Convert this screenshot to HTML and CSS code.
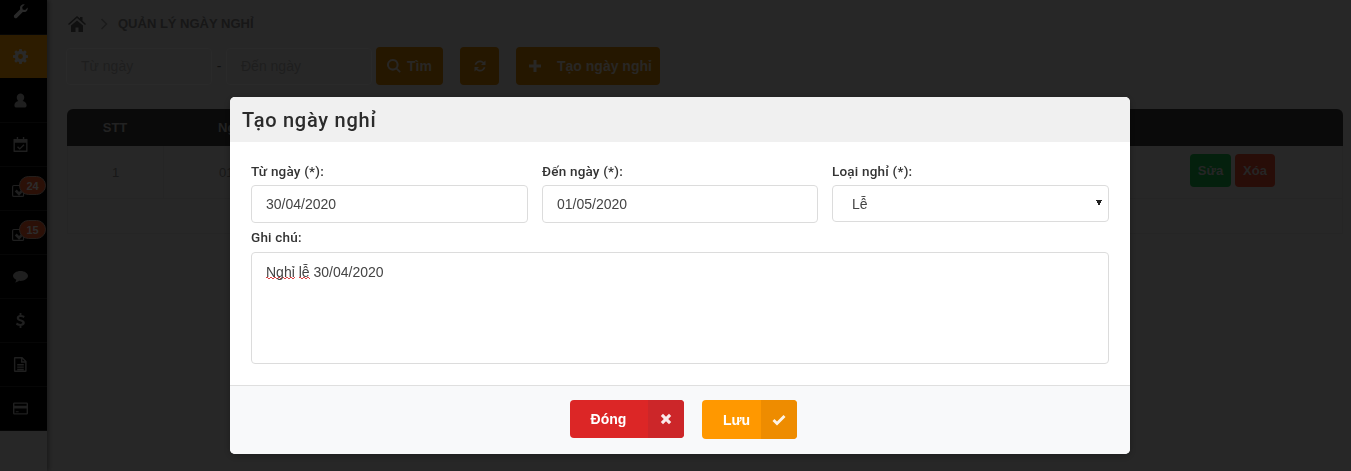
FILE: index.html
```html
<!DOCTYPE html>
<html lang="vi">
<head>
<meta charset="utf-8">
<title>Quản lý ngày nghỉ</title>
<link rel="stylesheet" href="styles.css">
</head>
<body>
<div class="app">
  <aside class="rail">
    <nav class="nav">
      <a class="nav-item first"><svg class="ico" viewBox="0 0 16 16"><path d="M15.600 3.600c.3 1.600-.1 3-1.200 4-1.100 1-2.600 1.300-4 .8L4.300 14.600c-.8.800-2 .8-2.800 0s-.8-2 0-2.800L7.700 5.600c-.5-1.400-.2-2.900.8-4C9.600.5 11 .1 12.500.4L9.800 3.100l.5 2.700 2.700.5z"/></svg></a>
      <a class="nav-item active"><svg class="ico" viewBox="0 0 16 16"><path fill-rule="evenodd" d="M6.700 0h2.600l.4 2.100 1.300.5L12.800 1.400l1.800 1.800-1.200 1.800.5 1.300 2.100.4v2.600l-2.100.4-.5 1.300 1.200 1.800-1.800 1.800-1.800-1.200-1.300.5-.4 2.100H6.700l-.4-2.100-1.300-.5-1.800 1.200-1.800-1.800 1.200-1.800-.5-1.300L0 9.300V6.700l2.100-.4.5-1.300-1.200-1.800 1.800-1.800L5 2.600l1.300-.5zM8 5.400a2.600 2.600 0 1 0 0 5.200 2.600 2.600 0 0 0 0-5.200z"/></svg></a>
      <a class="nav-item"><svg class="ico" viewBox="0 0 16 16"><path d="M8 .5a4 4 0 0 1 4 4.200c0 1.500-.8 3-1.800 3.800C12.800 9 14.500 10.500 14.500 13.200c0 1.400-1 2.300-2.200 2.300H3.700c-1.200 0-2.200-.9-2.200-2.300C1.500 10.500 3.200 9 5.800 8.500 4.800 7.700 4 6.200 4 4.700A4 4 0 0 1 8 .5z"/></svg></a>
      <a class="nav-item"><svg class="ico" viewBox="0 0 16 16"><path fill-rule="evenodd" d="M4 0h1.500v2h5V0H12v2h2.500A.9.900 0 0 1 15.500 3v12a.9.900 0 0 1-1 1h-13a.9.900 0 0 1-1-1V3a.9.900 0 0 1 1-1H4zM2 6v8.500h12V6zm9.200 1.700l1 1-5 5-2.900-2.900 1-1 1.900 1.900z"/></svg></a>
      <a class="nav-item"><svg class="ico ico-mail" viewBox="0 0 16 16"><path fill-rule="evenodd" d="M2 2h9a2 2 0 0 1 2 2v9a2 2 0 0 1-2 2H2a2 2 0 0 1-2-2V4a2 2 0 0 1 2-2zm0 1.300a.7.700 0 0 0-.7.700v9a.7.700 0 0 0 .7.700h9a.7.700 0 0 0 .7-.7V4a.7.700 0 0 0-.7-.7zM13.500 3.500l2 2-8 8-4.500-4.500 2-2 2.500 2.500z"/></svg><span class="badge">24</span></a>
      <a class="nav-item"><svg class="ico ico-mail" viewBox="0 0 16 16"><path fill-rule="evenodd" d="M2 2h9a2 2 0 0 1 2 2v9a2 2 0 0 1-2 2H2a2 2 0 0 1-2-2V4a2 2 0 0 1 2-2zm0 1.300a.7.700 0 0 0-.7.700v9a.7.700 0 0 0 .7.700h9a.7.700 0 0 0 .7-.7V4a.7.700 0 0 0-.7-.7zM13.500 3.500l2 2-8 8-4.500-4.500 2-2 2.500 2.500z"/></svg><span class="badge">15</span></a>
      <a class="nav-item"><svg class="ico" viewBox="0 0 16 16"><path d="M8 2c4.400 0 8 2.400 8 5.300 0 3-3.600 5.400-8 5.400-.6 0-1.100 0-1.700-.1C5.200 13.600 3.800 14.200 2.200 14.300c.7-.8 1.200-1.700 1.300-2.800C1.400 10.500 0 9 0 7.300 0 4.400 3.600 2 8 2z"/></svg></a>
      <a class="nav-item"><svg class="ico" viewBox="0 0 16 16"><path d="M7 0h2v2c1.500.1 2.700.6 3.500 1.200l-1 2C10.600 4.600 9.500 4.200 8.300 4.200c-1.200 0-1.900.4-1.900 1.100 0 .8.900 1.100 2.300 1.500 2.300.7 3.900 1.500 3.900 3.600 0 1.800-1.300 3-3.600 3.300V16H7v-2.300c-1.500-.1-3-.7-3.900-1.500l1.100-2c1 .8 2.300 1.400 3.700 1.400 1.200 0 2-.4 2-1.200s-.8-1.100-2.300-1.600C5.500 8.200 4 7.400 4 5.400c0-1.700 1.200-3 3-3.300z"/></svg></a>
      <a class="nav-item"><svg class="ico" viewBox="0 0 16 16"><path fill-rule="evenodd" d="M2 0h8l4.500 4.500V15a1 1 0 0 1-1 1H2a1 1 0 0 1-1-1V1a1 1 0 0 1 1-1zm.5 1.500v13h10.500V6H8.500V1.500zM10 2v2.500h2.500zM4.500 7.500h7V9h-7zm0 2.500h7v1.500h-7zm0 2.500h7V14h-7z"/></svg></a>
      <a class="nav-item"><svg class="ico" viewBox="0 0 16 16"><path fill-rule="evenodd" d="M1.500 1.500h13A1.500 1.500 0 0 1 16 3v10a1.500 1.500 0 0 1-1.500 1.500h-13A1.500 1.500 0 0 1 0 13V3a1.500 1.500 0 0 1 1.500-1.500zM1.500 3v2h13V3zm0 5v5h13V8zM3 10.800h3V12H3z"/></svg></a>
    </nav>
  </aside>
  <main class="main">
    <div class="crumbs">
      <svg class="home" viewBox="0 0 18 16"><path d="M9 0l3 2.600V1h2.500v3.800L18 7.900l-1 1.100-8-7-8 7-1-1.100zM3 9.600L9 4.400l6 5.200V16h-4.500v-4.500h-3V16H3z"/></svg>
      <svg class="chev" viewBox="0 0 8 12"><path d="M1.500 1l5 5-5 5" fill="none" stroke="currentColor" stroke-width="1.500"/></svg>
      <span class="crumb-title">QUẢN LÝ NGÀY NGHỈ</span>
    </div>
    <div class="filters">
      <div class="fake-input">Từ ngày</div>
      <span class="dash">-</span>
      <div class="fake-input">Đến ngày</div>
      <a class="btn btn-find"><svg class="btn-ico" viewBox="0 0 14 14"><path d="M5.800 0a5.800 5.800 0 0 1 4.700 9.200l3.300 3.300-1.300 1.300-3.300-3.300A5.800 5.800 0 1 1 5.800 0zm0 2a3.800 3.800 0 1 0 0 7.600 3.800 3.800 0 0 0 0-7.600z"/></svg>Tìm</a>
      <a class="btn btn-refresh"><svg class="btn-ico" viewBox="0 0 14 14"><path d="M7 1.500c1.500 0 2.800.6 3.800 1.500L12.500 1.500v4.500H8l1.700-1.800C9 3.500 8 3.200 7 3.200 5.300 3.200 4 4.200 3.400 5.800H1.600C2.200 3.300 4.400 1.500 7 1.500zM1.500 8H6L4.300 9.800c.7.700 1.700 1 2.700 1 1.700 0 3-1 3.600-2.600h1.800C11.800 10.700 9.600 12.500 7 12.500c-1.500 0-2.800-.6-3.800-1.500L1.500 12.500z"/></svg></a>
      <a class="btn btn-create"><svg class="btn-ico" viewBox="0 0 14 14"><path d="M5.500 1h3v4.500H13v3H8.500V13h-3V8.500H1v-3h4.500z"/></svg><span class="create-label">Tạo ngày nghỉ</span></a>
    </div>
    <div class="table">
      <div class="thead"><span class="c-stt">STT</span><span class="c-name">Ngày</span></div>
      <div class="trow"><span class="c-stt cell-line">1</span><span class="c-name">01/05/2020</span>
        <span class="row-actions"><a class="mini green">Sửa</a><a class="mini red">Xóa</a></span>
      </div>
      <div class="tfoot"></div>
    </div>
  </main>
</div>

<div class="overlay">
  <section class="modal">
    <header class="modal-head"><h2 class="modal-title">Tạo ngày nghỉ</h2></header>
    <div class="modal-body">
      <div class="grid3">
        <div class="field">
          <label class="label">Từ ngày (*):</label>
          <input class="control" type="text" value="30/04/2020">
        </div>
        <div class="field">
          <label class="label">Đến ngày (*):</label>
          <input class="control" type="text" value="01/05/2020">
        </div>
        <div class="field">
          <label class="label">Loại nghỉ (*):</label>
          <select class="control select"><option>Lễ</option></select>
        </div>
      </div>
      <label class="label note-label">Ghi chú:</label>
      <div class="textarea"><span class="typo">Nghỉ</span> <span class="typo">lễ</span> 30/04/2020</div>
    </div>
    <footer class="modal-foot">
      <a class="act act-close"><span class="act-text">Đóng</span><span class="act-ico"><svg viewBox="0 0 12 12"><path d="M3 .8L6 3.800 9 .8 11.200 3 8.200 6 11.200 9 9 11.200 6 8.200 3 11.200 .8 9 3.800 6 .8 3z"/></svg></span></a>
      <a class="act act-save"><span class="act-text">Lưu</span><span class="act-ico"><svg viewBox="0 0 14 12"><path d="M5 11.500L.5 7l2-2L5 7.500 11.500 1l2 2z"/></svg></span></a>
    </footer>
  </section>
</div>
</body>
</html>
```

FILE: styles.css
```css
* { box-sizing: border-box; }
html, body { margin: 0; height: 100%; overflow: hidden; }
body { font-family: "Liberation Sans", Arial, sans-serif; font-size: 14px; color: #333; background: #c3c3c3; }

.app { display: flex; height: 471px; }
.rail { width: 47px; flex: none; box-shadow: 2px 0 4px rgba(0,0,0,.35); }
.nav { display: flex; flex-direction: column; background: #000; }
.nav-item { position: relative; height: 44px; display: flex; align-items: center; justify-content: center; color: #999; border-bottom: 1px solid #222; }
.nav-item.first { height: 35px; padding-bottom: 11px; color: #ccc; }
.nav-item.active { background: #e08c00; background-clip: padding-box; color: #ccc; border-bottom-color: #000; }
.ico { width: 15px; height: 15px; fill: currentColor; margin-left: -7px; }
.ico-mail { margin-left: -9px; margin-top: 3px; color: #999; }
.badge { position: absolute; left: 19px; top: 9px; width: 27px; height: 19px; border-radius: 10px; border: 1px solid #b09488; background: #d85024; color: #ddd; font-size: 11px; font-weight: bold; display: flex; align-items: center; justify-content: center; }

.main { flex: 1; padding: 14px 8px 0 19px; min-width: 0; }
.crumbs { display: flex; align-items: center; height: 19px; margin-left: 2px; }
.home { width: 18px; height: 16px; fill: #505050; }
.chev { width: 8px; height: 12px; margin-left: 14px; color: #888; }
.crumb-title { margin-left: 10px; font-size: 13px; font-weight: bold; color: #737373; }

.filters { display: flex; align-items: center; margin-top: 14px; height: 38px; }
.fake-input { width: 146px; height: 37px; padding: 0 14px; line-height: 35px; border: 1px solid #cfcfcf; border-radius: 4px; color: #989898; }
.dash { width: 14px; text-align: center; color: #555; }
.btn { height: 38px; display: flex; align-items: center; justify-content: center; border-radius: 4px; background: #b87200; color: #c8c0b8; font-weight: bold; }
.btn-ico { width: 14px; height: 14px; fill: currentColor; }
.btn-find { width: 67px; margin-left: 4px; gap: 6px; }
.btn-refresh { width: 39px; margin-left: 17px; }
.btn-create { width: 144px; margin-left: 17px; justify-content: flex-start; padding-left: 12px; }
.create-label { margin-left: 15px; }

.table { margin-top: 24px; margin-left: 1px; }
.thead { height: 37px; background: #333; border-radius: 6px 6px 0 0; display: flex; align-items: center; color: #aaa; font-weight: bold; font-size: 13px; }
.trow { position: relative; height: 53px; display: flex; align-items: center; border: 1px solid #b8b8b8; border-top: 0; font-size: 13px; color: #777; }
.tfoot { height: 35px; border: 1px solid #b8b8b8; border-top: 0; }
.c-stt { width: 96px; text-align: center; }
.c-name { margin-left: 55px; }
.cell-line { align-self: stretch; display: flex; align-items: center; justify-content: center; border-right: 1px solid #b8b8b8; }
.row-actions { position: absolute; left: 1122px; top: 8px; display: flex; gap: 4px; }
.mini { height: 33px; display: flex; align-items: center; justify-content: center; border-radius: 4px; font-weight: bold; font-size: 13px; color: #bbb; }
.mini.green { width: 41px; background: #18a040; }
.mini.red { width: 40px; background: #c84028; }

.overlay { position: fixed; inset: 0; background: rgba(0,0,0,.8); }
.modal { position: absolute; left: 230px; top: 97px; width: 900px; height: 357px; background: #fff; border-radius: 5px; overflow: hidden; display: flex; flex-direction: column; box-shadow: 0 2px 8px rgba(0,0,0,.3); }
.modal-head { height: 45px; flex: none; background: #f0f0f0; padding: 0 12px; display: flex; align-items: center; }
.modal-title { margin: 0; font-family: Roboto, "Liberation Sans", sans-serif; font-size: 20px; font-weight: 500; letter-spacing: .75px; color: #2b2b2b; }
.modal-body { flex: 1; padding: 21px 21px 0; }
.grid3 { display: grid; grid-template-columns: 277px 276px 277px; column-gap: 14px; }
.field { display: flex; flex-direction: column; }
.label { display: block; font-family: Roboto, "Liberation Sans", sans-serif; font-size: 13.5px; font-weight: 500; line-height: 17px; color: #333; letter-spacing: .2px; }
.control { margin-top: 5px; height: 38px; width: 100%; border: 1px solid #dcdcdc; border-radius: 4px; padding: 0 14px; font: 14px "Liberation Sans", Arial, sans-serif; color: #444; background: #fff; outline: 0; }
.select { height: 37px; padding-left: 19px; appearance: none; -webkit-appearance: none; background-image: linear-gradient(to top right, transparent 50%, #222 50%), linear-gradient(to top left, transparent 50%, #222 50%); background-size: 3px 6px, 3px 6px; background-repeat: no-repeat; background-position: right 9px top 14px, right 6px top 14px; }
.note-label { margin-top: 6px; }
.textarea { margin-top: 6px; height: 112px; border: 1px solid #dcdcdc; border-radius: 4px; padding: 10px 14px; line-height: 18px; color: #444; }
.typo { background-image: linear-gradient(90deg, #d44 50%, transparent 50%), linear-gradient(90deg, #d44 50%, transparent 50%); background-size: 4px 1px; background-repeat: repeat-x; background-position: 0 calc(100% - 2px), 2px calc(100% - 1px); }
.modal-foot { height: 69px; flex: none; background: #f8f9fa; border-top: 1px solid #dfdfdf; display: flex; justify-content: center; align-items: flex-start; padding: 14px 0 0 6px; gap: 18px; }
.act { display: flex; height: 38px; border-radius: 4px; overflow: hidden; color: #fff; font-weight: bold; }
.act-text { display: flex; align-items: center; justify-content: center; }
.act-ico { display: flex; align-items: center; justify-content: center; }
.act-ico svg { width: 12px; height: 12px; fill: #fff; opacity: .9; }
.act-close { width: 114px; background: #dc2626; }
.act-close .act-text { width: 78px; }
.act-close .act-ico { width: 36px; background: #cc2629; }
.act-save { width: 95px; height: 39px; background: #ff9800; }
.act-save .act-text { width: 59px; padding-left: 11px; }
.act-save .act-ico { width: 36px; background: #ee8c00; }
.act-save svg { width: 14px; }
```
